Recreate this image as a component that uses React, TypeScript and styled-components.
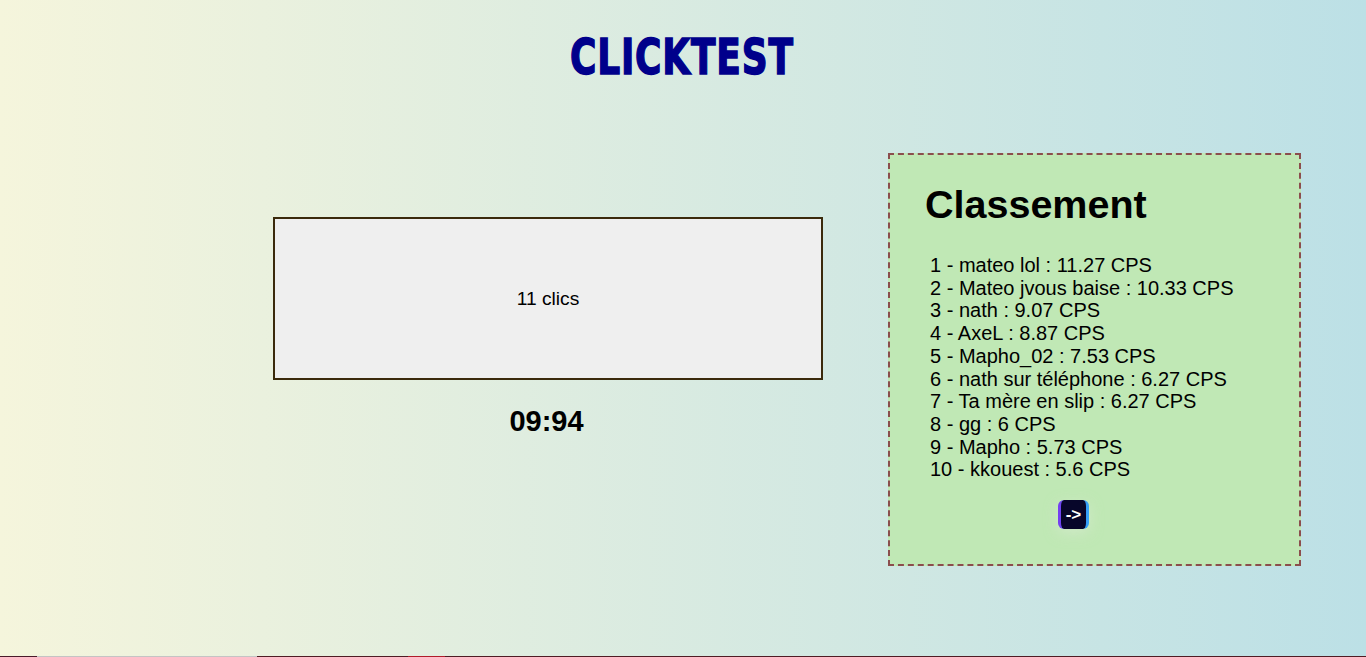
import React from "react";
import styled, { createGlobalStyle } from "styled-components";

const GlobalStyle = createGlobalStyle`
  html, body {
    margin: 0;
    padding: 0;
    height: 657px;
    overflow: hidden;
  }
  body {
    font-family: "Liberation Sans", Arial, sans-serif;
    color: #000;
  }
`;

const Page = styled.div`
  width: 1366px;
  height: 657px;
  display: flex;
  flex-direction: column;
  background: linear-gradient(to right, #f5f5dc, #bce0e6);
`;

const Header = styled.header`
  height: 115px;
  display: flex;
  justify-content: center;
  align-items: flex-start;
  padding-top: 28px;
  box-sizing: border-box;
`;

const Title = styled.h1`
  margin: 0;
  font-family: "Liberation Sans Narrow", "DejaVu Sans Condensed", "Liberation Sans", sans-serif;
  font-weight: 700;
  font-size: 50px;
  line-height: 58px;
  color: #00008b;
  -webkit-text-stroke: 1.4px #00008b;
  letter-spacing: 1px;
  transform: scaleX(0.8);
  margin-left: -2px;
`;

const Main = styled.main`
  flex: 1;
  display: flex;
  align-items: flex-start;
  padding-left: 273px;
  padding-top: 38px;
  gap: 65px;
`;

const GameColumn = styled.section`
  display: flex;
  flex-direction: column;
  align-items: center;
  padding-top: 64px;
`;

const ClickBox = styled.button`
  width: 550px;
  height: 163px;
  box-sizing: border-box;
  border: 2px solid #3b2a0c;
  background: #efefef;
  font-family: "Liberation Sans", Arial, sans-serif;
  font-size: 19.2px;
  color: #000;
  padding: 0;
  cursor: pointer;
`;

const Timer = styled.div`
  margin-top: 25px;
  margin-right: 3px;
  font-weight: 700;
  font-size: 29px;
  line-height: 33px;
`;

const Board = styled.aside`
  width: 413px;
  height: 413px;
  box-sizing: border-box;
  border: 2px dashed #8b4d4d;
  background: #c0e8b5;
  padding: 26px 0 0 35px;
  display: flex;
  flex-direction: column;
`;

const BoardTitle = styled.h2`
  margin: 0;
  font-size: 39.5px;
  line-height: 46px;
  font-weight: 700;
`;

const List = styled.ol`
  list-style: none;
  margin: 27px 0 0 0;
  padding: 0 0 0 5px;
  font-size: 20px;
  line-height: 22.7px;
`;

const Item = styled.li`
  white-space: nowrap;
`;

const NextButton = styled.button`
  align-self: flex-start;
  margin: 19px 0 0 133px;
  width: 31px;
  height: 29px;
  box-sizing: border-box;
  border: none;
  border-radius: 6px;
  background:
    linear-gradient(#07062a, #07062a) padding-box,
    linear-gradient(to right, #7a3cf0, #2a6cf5, #37a5f8) border-box;
  border-left: 3px solid transparent;
  border-right: 3px solid transparent;
  color: #fff;
  font-family: "Liberation Sans", Arial, sans-serif;
  font-weight: 700;
  font-size: 17px;
  padding: 0;
  box-shadow: 0 4px 14px rgba(220, 235, 215, 0.55);
  cursor: pointer;
`;

const BottomStrip = styled.div`
  height: 1px;
  display: flex;
`;

const Seg = styled.div<{ $w: number; $c: string }>`
  width: ${(p) => p.$w}px;
  flex: ${(p) => (p.$w === 0 ? 1 : "none")};
  background: ${(p) => p.$c};
`;

const scores = [
  "1 - mateo lol : 11.27 CPS",
  "2 - Mateo jvous baise : 10.33 CPS",
  "3 - nath : 9.07 CPS",
  "4 - AxeL : 8.87 CPS",
  "5 - Mapho_02 : 7.53 CPS",
  "6 - nath sur téléphone : 6.27 CPS",
  "7 - Ta mère en slip : 6.27 CPS",
  "8 - gg : 6 CPS",
  "9 - Mapho : 5.73 CPS",
  "10 - kkouest : 5.6 CPS",
];

export default function App() {
  return (
    <>
      <GlobalStyle />
      <Page>
        <Header>
          <Title>CLICKTEST</Title>
        </Header>
        <Main>
          <GameColumn>
            <ClickBox>11 clics</ClickBox>
            <Timer>09:94</Timer>
          </GameColumn>
          <Board>
            <BoardTitle>Classement</BoardTitle>
            <List>
              {scores.map((s) => (
                <Item key={s}>{s}</Item>
              ))}
            </List>
            <NextButton>-&gt;</NextButton>
          </Board>
        </Main>
        <BottomStrip>
          <Seg $w={37} $c="#4a1a2a" />
          <Seg $w={220} $c="#c4c4c4" />
          <Seg $w={151} $c="#4f1c24" />
          <Seg $w={37} $c="#b01c2a" />
          <Seg $w={0} $c="#4f1c24" />
        </BottomStrip>
      </Page>
    </>
  );
}
